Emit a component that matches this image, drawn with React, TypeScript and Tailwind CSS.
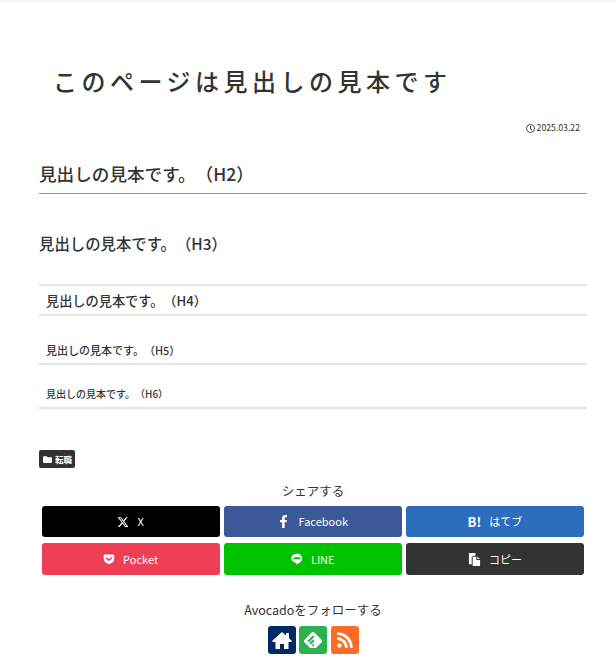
import type { ReactNode } from "react";
import { FaFacebookF, FaFolder, FaGetPocket, FaRegClock, FaRss } from "react-icons/fa";
import { FaXTwitter } from "react-icons/fa6";
import { SiFeedly } from "react-icons/si";

function LineIcon() {
  return (
    <svg viewBox="0 0 24 24" className="w-[12px] h-[12px]" fill="currentColor">
      <path d="M12 1.500C5.600 1.500.5 5.600.5 10.700c0 4.600 4 8.400 9.500 9.100.4.100.9.300 1 .6.100.3.100.7 0 1l-.2 1c0 .3-.2 1.100 1 .6s6.300-3.700 8.600-6.300c1.600-1.700 2.100-3.500 2.100-5.100C22.500 5.600 18.400 1.500 12 1.500z" />
      <rect x="5.500" y="8.500" width="13" height="4" rx="1" fill="#00c300" />
    </svg>
  );
}

function CopyIcon() {
  return (
    <svg viewBox="0 0 14 14" className="w-[13px] h-[13px]" fill="currentColor">
      <path d="M1 0h7v3H5.500L4 4.500V12H1z" />
      <path d="M5 4h4v3.500h4V14H5z" />
      <path d="M10 4l3 2.500h-3z" />
    </svg>
  );
}

function HomeIcon() {
  return (
    <svg viewBox="0 0 20 18" className="w-[20px] h-[18px]" fill="currentColor">
      <path d="M10 1 0 10l1 1h2.500v7h4.500v-5h4v5h4.500v-7H19l1-1-3-2.700V2h-3v2.600z" />
    </svg>
  );
}

const shareButtons: { label: string; color: string; height: string; icon: ReactNode }[] = [
  { label: "X", color: "bg-[#000000]", height: "h-[31px]", icon: <FaXTwitter className="text-[12px]" /> },
  { label: "Facebook", color: "bg-[#3b5998]", height: "h-[31px]", icon: <FaFacebookF className="text-[13px]" /> },
  { label: "はてブ", color: "bg-[#2c6ebd]", height: "h-[31px]", icon: <span className="font-bold text-[13px] leading-none">B!</span> },
  { label: "Pocket", color: "bg-[#ef3f56]", height: "h-[32px]", icon: <FaGetPocket className="text-[12px]" /> },
  { label: "LINE", color: "bg-[#00c300]", height: "h-[32px]", icon: <LineIcon /> },
  { label: "コピー", color: "bg-[#333333]", height: "h-[32px]", icon: <CopyIcon /> },
];

export default function App() {
  return (
    <div className="min-h-[666px] bg-white text-[#333] font-['Noto_Sans_CJK_JP','Noto_Sans',sans-serif] [text-spacing-trim:space-all] overflow-hidden">
      <div className="h-[2px] bg-[#f5f5f5]" />
      <main className="pl-[39px] pr-[29px]">
        {/* Title */}
        <h1 className="pt-[61px] pl-[14px] text-[24px] leading-[36px] font-medium tracking-[4.500px]">
          このページは見出しの見本です
        </h1>
        <div className="mt-[22px] pr-[7px] flex justify-end items-center gap-[2px] text-[8.700px] leading-[14px]">
          <FaRegClock className="text-[9px]" />
          <span>2025.03.22</span>
        </div>

        {/* Headings */}
        <h2 className="mt-[25px] pb-[6px] border-b border-[#999] text-[17.600px] leading-[27px] font-medium">
          見出しの見本です。（H2）
        </h2>
        <h3 className="mt-[37px] text-[15.400px] leading-[24px] font-medium">見出しの見本です。（H3）</h3>
        <h4 className="mt-[29px] pt-[5px] pb-[3px] pl-[7px] border-y-2 border-[#e5e5e5] text-[13.200px] leading-[20px] font-medium">
          見出しの見本です。（H4）
        </h4>
        <h5 className="mt-[26px] pb-[4px] pl-[7px] border-b-2 border-[#e5e5e5] text-[11px] leading-[17px] font-medium">
          見出しの見本です。（H5）
        </h5>
        <h6 className="mt-[21px] pb-[5px] pl-[7px] border-b-2 border-[#e5e5e5] text-[10px] leading-[16px] font-medium">
          見出しの見本です。（H6）
        </h6>

        {/* Category */}
        <div className="mt-[41px] flex">
          <span className="flex items-center gap-[3px] h-[18px] w-[36px] pl-[4px] rounded-[2px] bg-[#333] text-white text-[8.500px] font-bold">
            <FaFolder className="text-[9px]" />
            転職
          </span>
        </div>

        {/* Share */}
        <p className="mt-[14px] text-center text-[12.500px] leading-[18px]">シェアする</p>
        <div className="mt-[6px] pl-[2.500px] pr-[3px] grid grid-cols-3 gap-x-[4px] gap-y-[6px]">
          {shareButtons.map((b) => (
            <div
              key={b.label}
              className={`${b.color} ${b.height} rounded-[3px] flex items-center justify-center gap-[8px] text-white text-[11px]`}
            >
              {b.icon}
              <span>{b.label}</span>
            </div>
          ))}
        </div>

        {/* Follow */}
        <p className="mt-[26px] text-center text-[12.500px] leading-[18px]">Avocadoをフォローする</p>
        <div className="mt-[7px] flex justify-center gap-[3.500px]">
          <div className="w-[28px] h-[28px] rounded-[3px] bg-[#002967] text-white flex items-center justify-center">
            <HomeIcon />
          </div>
          <div className="w-[28px] h-[28px] rounded-[3px] bg-[#2bb24c] text-white flex items-center justify-center">
            <SiFeedly className="text-[18px]" />
          </div>
          <div className="w-[28px] h-[28px] rounded-[3px] bg-[#f86e27] text-white flex items-center justify-center">
            <FaRss className="text-[18px]" />
          </div>
        </div>
      </main>
    </div>
  );
}
